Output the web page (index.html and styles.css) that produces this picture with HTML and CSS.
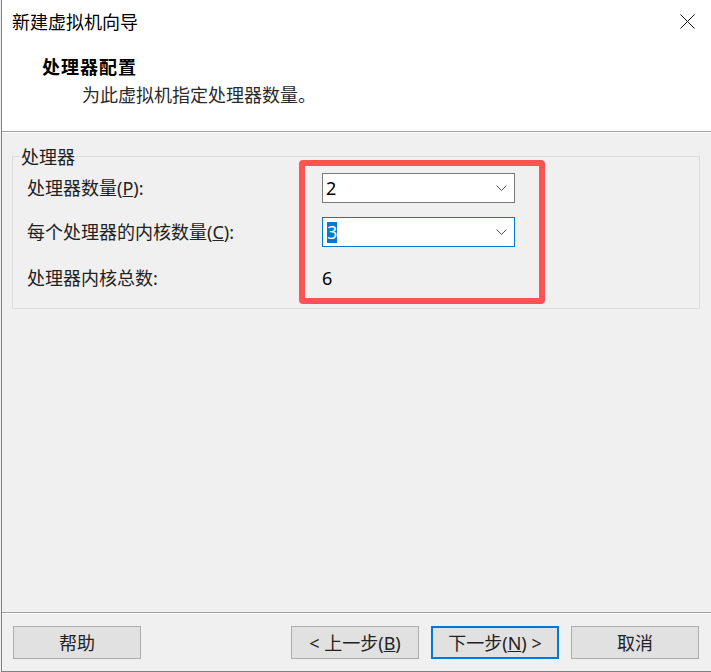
FILE: index.html
```html
<!DOCTYPE html>
<html lang="zh-CN">
<head>
<meta charset="utf-8">
<title>新建虚拟机向导</title>
<link rel="stylesheet" href="styles.css">
</head>
<body>
<div class="window">
  <header class="header">
    <div class="titlebar">
      <span class="title">新建虚拟机向导</span>
      <svg class="close" width="15" height="15" viewBox="0 0 15 15" aria-label="关闭">
        <line x1="0.5" y1="0.5" x2="14.5" y2="14.5" />
        <line x1="14.5" y1="0.5" x2="0.5" y2="14.5" />
      </svg>
    </div>
    <div class="heading">处理器配置</div>
    <div class="subtitle">为此虚拟机指定处理器数量。</div>
  </header>

  <main class="main">
    <fieldset class="group">
      <legend class="legend">处理器</legend>
      <div class="rows">
        <div class="label">处理器数量(<u>P</u>):</div>
        <div class="combo">
          <span class="value">2</span>
          <svg class="chev" width="11" height="6" viewBox="0 0 11 6"><polyline points="0.5,0.5 5.5,5.5 10.5,0.5" /></svg>
        </div>

        <div class="label">每个处理器的内核数量(<u>C</u>):</div>
        <div class="combo combo-focus">
          <span class="value selected">3</span>
          <svg class="chev" width="11" height="6" viewBox="0 0 11 6"><polyline points="0.5,0.5 5.5,5.5 10.5,0.5" /></svg>
        </div>

        <div class="label">处理器内核总数:</div>
        <div class="total">6</div>

        <div class="highlight"></div>
      </div>
    </fieldset>
  </main>

  <footer class="footer">
    <button class="btn">帮助</button>
    <div class="nav">
      <button class="btn">&lt; 上一步(<u>B</u>)</button>
      <button class="btn btn-primary">下一步(<u>N</u>) &gt;</button>
      <button class="btn">取消</button>
    </div>
  </footer>
</div>
</body>
</html>
```
FILE: styles.css
```css
html, body {
  margin: 0;
  padding: 0;
}

body {
  width: 711px;
  height: 672px;
  overflow: hidden;
  background: #f0f0f0;
  font-family: "Noto Sans", "Noto Sans CJK SC", sans-serif;
  font-size: 18px;
  color: #222;
}

.window {
  margin-left: 1px;
  height: 672px;
  box-sizing: border-box;
  border-left: 1px solid #808080;
  border-bottom: 1px solid #808080;
  display: flex;
  flex-direction: column;
  background: #f0f0f0;
}

/* ---------- header ---------- */
.header {
  height: 132px;
  box-sizing: border-box;
  background: #fff;
  border-bottom: 1px solid #a0a0a0;
  flex: none;
}

.titlebar {
  height: 42px;
  display: flex;
  align-items: center;
  justify-content: space-between;
  padding: 0 16px 0 10px;
}

.title {
  font-family: "Noto Sans CJK SC", sans-serif;
  font-size: 18px;
  color: #000;
}

.close line {
  stroke: #111;
  stroke-width: 1;
}

.heading {
  margin: 10px 0 0 40px;
  font-family: "Noto Sans CJK SC", sans-serif;
  font-weight: 700;
  font-size: 18px;
  line-height: 28px;
  letter-spacing: 1px;
  color: #000;
}

.subtitle {
  margin-left: 80px;
  font-family: "Noto Sans CJK SC", sans-serif;
  font-size: 18px;
  line-height: 28px;
  color: #2a2a2a;
}

/* ---------- main ---------- */
.main {
  flex: 1;
  border-top: 1px solid #fff;
}

.group {
  margin: 13px 11px 0 10px;
  padding: 0;
  border: 1px solid #dcdcdc;
  min-inline-size: 0;
}

.legend {
  margin-left: 7px;
  padding: 0 1px;
  font-family: "Noto Sans CJK SC", sans-serif;
  font-size: 18px;
  line-height: 20px;
}

.rows {
  position: relative;
  display: grid;
  grid-template-columns: 295px 193px;
  grid-template-rows: 30px 30px 34px;
  row-gap: 14px;
  align-items: center;
  padding: 7px 0 13px 14px;
}

.label {
  line-height: 24px;
  white-space: nowrap;
}

.combo {
  height: 30px;
  box-sizing: border-box;
  border: 1px solid #7a7a7a;
  background: #fff;
  display: flex;
  align-items: center;
  justify-content: space-between;
  padding: 0 7px 0 3px;
  color: #000;
}

.combo-focus {
  border-color: #0078d7;
  padding-left: 4px;
}

.value {
  line-height: 24px;
}

.selected {
  line-height: 21px;
  background: #0078d7;
  color: #fff;
}

.chev polyline {
  fill: none;
  stroke: #555;
  stroke-width: 1;
}

.total {
  color: #000;
  line-height: 24px;
}

.highlight {
  position: absolute;
  left: 286px;
  top: -6px;
  width: 246px;
  height: 144px;
  box-sizing: border-box;
  border: 6px solid #fe5353;
  border-radius: 4px;
  pointer-events: none;
}

/* ---------- footer ---------- */
.footer {
  flex: none;
  display: flex;
  justify-content: space-between;
  border-top: 1px solid #a0a0a0;
  box-shadow: inset 0 1px 0 #fff;
  padding: 13px 12px 12px 11px;
}

.nav {
  display: flex;
  gap: 12px;
}

.btn {
  width: 128px;
  height: 33px;
  box-sizing: border-box;
  padding: 0;
  margin: 0;
  background: #e1e1e1;
  border: 1px solid #adadad;
  font-family: "Noto Sans", "Noto Sans CJK SC", sans-serif;
  font-size: 18px;
  line-height: 24px;
  color: #222;
}

.btn-primary {
  border: 2px solid #0078d7;
}
```
